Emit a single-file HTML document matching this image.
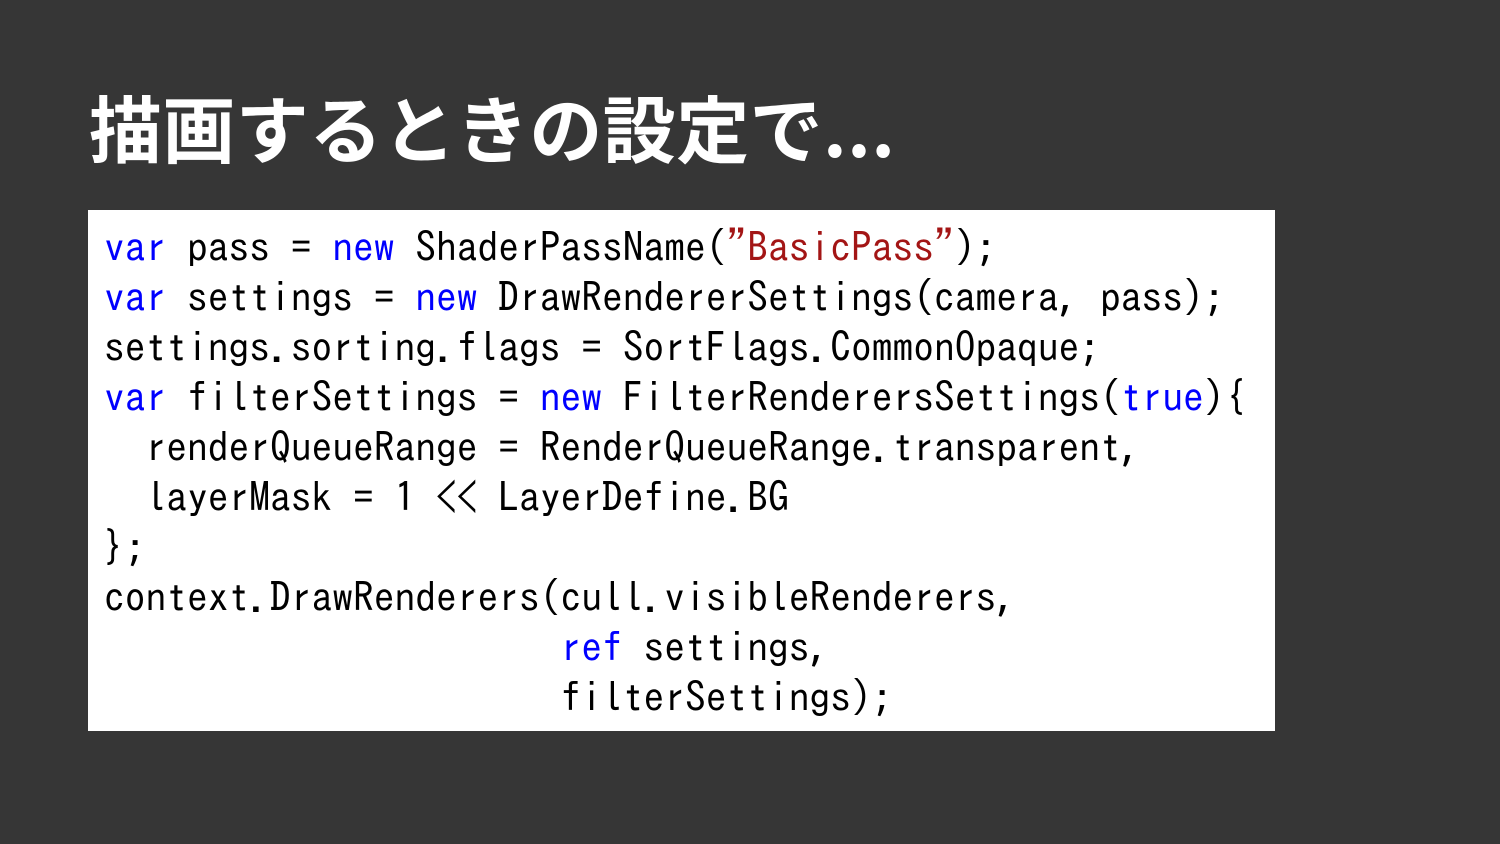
<!DOCTYPE html>
<html><head><meta charset="utf-8"><style>
html,body{margin:0;padding:0}
body{width:1500px;height:844px;background:#363636;position:relative;overflow:hidden}
h1{position:absolute;left:89px;top:83px;margin:0;color:#fff;font:bold 73px/1.2 "Noto Sans CJK JP","Liberation Sans",sans-serif;white-space:nowrap;letter-spacing:0.4px}
.box{position:absolute;left:88px;top:210px;width:1187px;height:521px;background:#fff}
pre{position:absolute;left:104px;top:221px;margin:0;font:41.5px/50px "IPAGothic","Liberation Mono",monospace;color:#000}
.k{color:#0000ff}.s{color:#a31515}
</style></head><body>
<h1>描画するときの設定で...</h1>
<div class="box"></div>
<pre><span class="k">var</span> pass = <span class="k">new</span> ShaderPassName(<span class="s">"BasicPass"</span>);
<span class="k">var</span> settings = <span class="k">new</span> DrawRendererSettings(camera, pass);
settings.sorting.flags = SortFlags.CommonOpaque;
<span class="k">var</span> filterSettings = <span class="k">new</span> FilterRenderersSettings(<span class="k">true</span>){
  renderQueueRange = RenderQueueRange.transparent,
  layerMask = 1 &lt;&lt; LayerDefine.BG
};
context.DrawRenderers(cull.visibleRenderers,
                      <span class="k">ref</span> settings,
                      filterSettings);</pre>
</body></html>
